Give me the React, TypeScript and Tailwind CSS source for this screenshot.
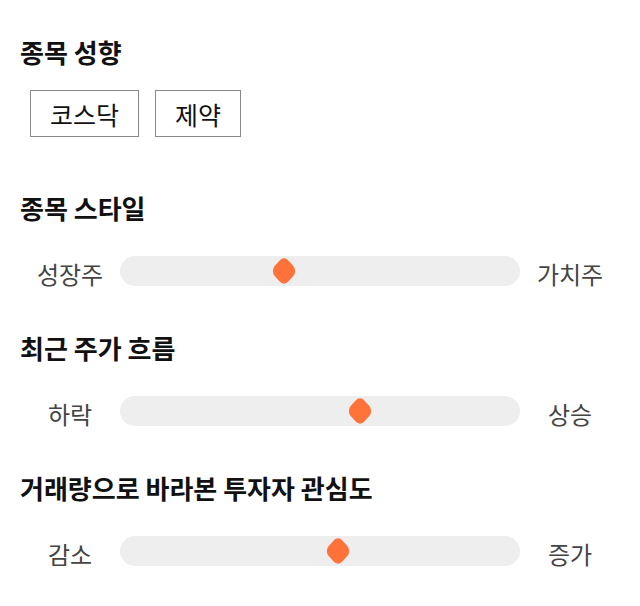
import React from 'react';

const font = { fontFamily: '"Noto Sans CJK KR", "Noto Sans", sans-serif' };

const sliders = [
  { title: '종목 스타일', left: '성장주', right: '가치주', value: 41 },
  { title: '최근 주가 흐름', left: '하락', right: '상승', value: 60 },
  { title: '거래량으로 바라본 투자자 관심도', left: '감소', right: '증가', value: 54.5 },
];

function Slider({ left, right, value }: { left: string; right: string; value: number }) {
  return (
    <div className="flex items-center h-[30px]">
      <div className="w-[100px] text-center text-[24px] text-[#444] leading-[30px] pt-[5px]">{left}</div>
      <div className="relative flex-1 h-[30px] rounded-full bg-[#eeeeee]">
        <div
          className="absolute top-1/2 -translate-x-1/2 -translate-y-1/2 scale-x-[0.88]"
          style={{ left: `${value}%` }}
        >
          <div className="w-[22px] h-[22px] rotate-45 rounded-[7px] bg-[#ff733a]" />
        </div>
      </div>
      <div className="w-[100px] text-center text-[24px] text-[#444] leading-[30px] pt-[5px]">{right}</div>
    </div>
  );
}

export default function App() {
  return (
    <div className="w-[640px] h-[606px] bg-white px-[20px] pt-[36px]" style={font}>
      {/* 종목 성향 */}
      <h2 className="text-[26px] font-bold text-[#111] leading-[32px]">종목 성향</h2>
      <div className="flex gap-[16px] mt-[22px] ml-[10px]">
        {['코스닥', '제약'].map((t) => (
          <div
            key={t}
            className="h-[47px] px-[19px] pt-[3px] border border-[#888] flex items-center text-[25px] text-[#111]"
          >
            {t}
          </div>
        ))}
      </div>

      {sliders.map((s, i) => (
        <section key={s.title} className={i === 0 ? 'mt-[55px]' : 'mt-[46px]'}>
          <h2 className="text-[26px] font-bold text-[#111] leading-[32px]">{s.title}</h2>
          <div className="mt-[32px]">
            <Slider left={s.left} right={s.right} value={s.value} />
          </div>
        </section>
      ))}
    </div>
  );
}
